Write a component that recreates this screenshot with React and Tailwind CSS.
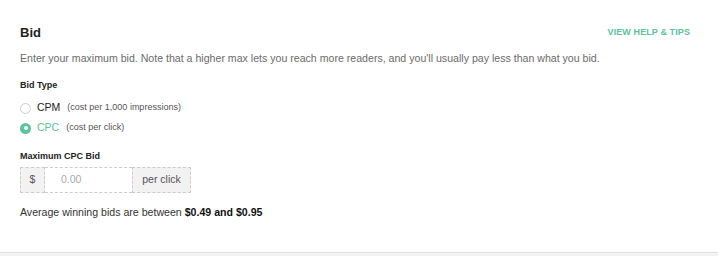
import React, { useState } from 'react'

const font = { fontFamily: '"Liberation Sans", Arial, sans-serif' }

function Radio({ checked, label, hint, onSelect }) {
  return (
    <label className="flex items-center h-[20px] cursor-pointer" onClick={onSelect}>
      {checked ? (
        <span className="w-[11px] h-[11px] rounded-full bg-[#5cc49c] flex items-center justify-center">
          <span className="w-[4px] h-[4px] rounded-full bg-white" />
        </span>
      ) : (
        <span className="w-[11px] h-[11px] rounded-full border border-[#cfcfcf] bg-white" />
      )}
      <span className={`ml-[6px] text-[10.5px] ${checked ? 'text-[#5cc49c]' : 'text-[#222]'}`}>{label}</span>
      <span className="ml-[7px] text-[9px] text-[#555]">{hint}</span>
    </label>
  )
}

export default function App() {
  const [type, setType] = useState('cpc')

  return (
    <div className="w-[718px] h-[256px] bg-[#f3f3f3] overflow-hidden" style={font}>
      <div className="h-[253px] bg-white border-b border-[#dedede] px-[20px] pt-[25px]">
        <div className="flex items-center justify-between pr-[8px]">
          <h2 className="text-[13px] font-bold text-[#222] leading-[16px]">Bid</h2>
          <a className="text-[9px] font-bold text-[#5cc49c] tracking-[0.1px]">VIEW HELP &amp; TIPS</a>
        </div>
        <p className="mt-[10px] text-[10.6px] text-[#6b6b6b] leading-[14px]">
          Enter your maximum bid. Note that a higher max lets you reach more readers, and you'll usually pay less than what you bid.
        </p>

        <div className="mt-[14px] text-[9px] font-bold text-[#222] leading-[12px]">Bid Type</div>
        <div className="mt-[7px] flex flex-col">
          <Radio checked={type === 'cpm'} label="CPM" hint="(cost per 1,000 impressions)" onSelect={() => setType('cpm')} />
          <Radio checked={type === 'cpc'} label="CPC" hint="(cost per click)" onSelect={() => setType('cpc')} />
        </div>

        <div className="mt-[12px] text-[9px] font-bold text-[#222] leading-[12px]">Maximum CPC Bid</div>
        <div className="mt-[5px] flex h-[26px] w-[171px] text-[10.5px]">
          <span className="w-[25px] flex items-center justify-center bg-[#f2f2f2] border border-dashed border-[#cdcdcd] text-[#555]">$</span>
          <input
            className="w-[87px] border-y border-dashed border-[#cdcdcd] px-[16px] outline-none placeholder:text-[#aaa] text-[#333]"
            placeholder="0.00"
          />
          <span className="w-[59px] flex items-center justify-center bg-[#f2f2f2] border border-dashed border-[#cdcdcd] text-[#555]">per click</span>
        </div>

        <p className="mt-[12px] text-[10.6px] text-[#333] leading-[14px]">
          Average winning bids are between <strong className="text-[#111]">$0.49 and $0.95</strong>
        </p>
      </div>
    </div>
  )
}
